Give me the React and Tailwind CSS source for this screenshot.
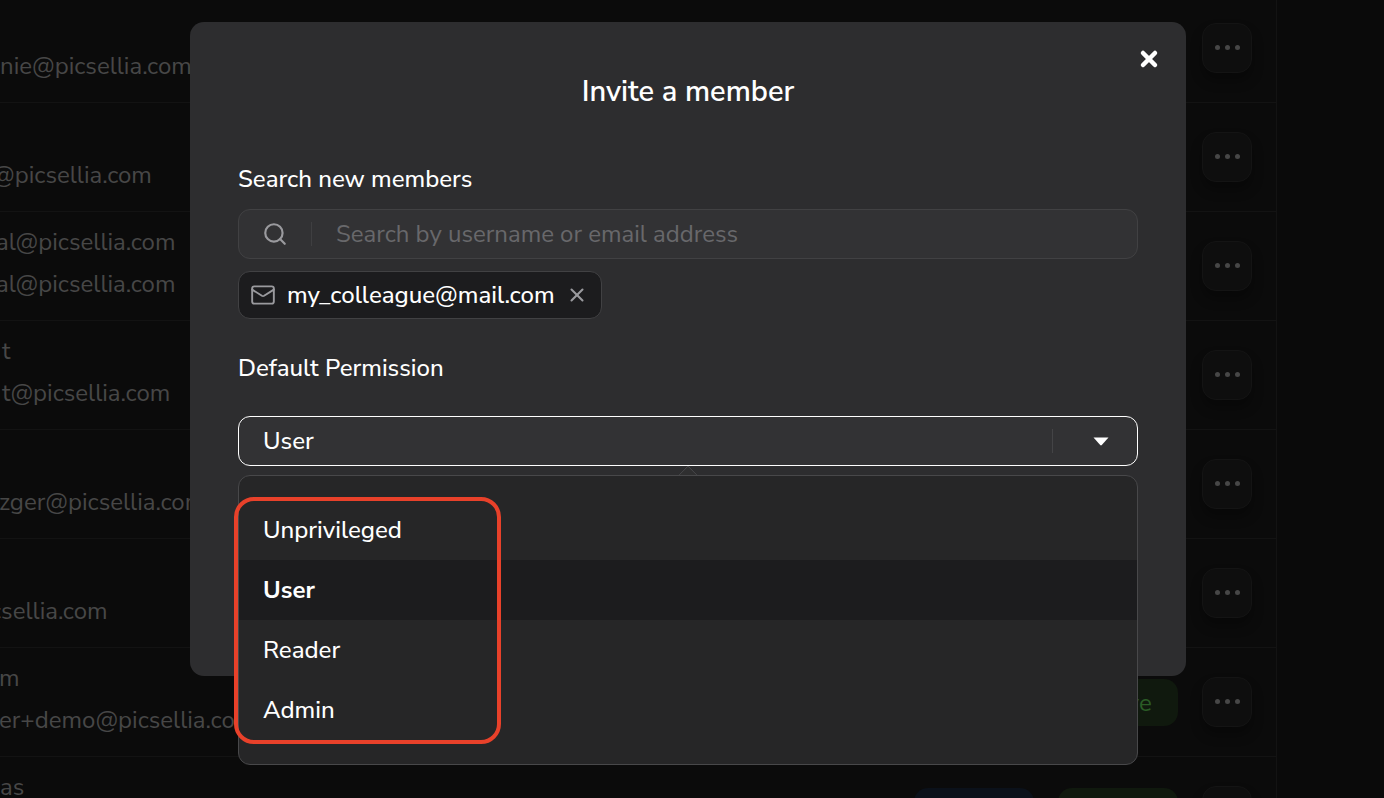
import React from 'react'
import { Search, Mail, X } from 'lucide-react'

const font = { fontFamily: '"Nunito Sans", Lato, "Open Sans", sans-serif' }

const rows = [
  { email: 'nie@picsellia.com', shift: 'ml-0' },
  { email: '@picsellia.com', shift: '-ml-[8px]' },
  { name: 'al@picsellia.com', email: 'al@picsellia.com', shift: '-ml-[4px]' },
  { name: 't', email: 't@picsellia.com', shift: 'ml-[2px]' },
  { email: 'zger@picsellia.com', shift: '-ml-[1px]' },
  { email: 'csellia.com', shift: '-ml-[10px]' },
  { name: 'm', email: 'er+demo@picsellia.com', shift: '-ml-[1px]', badges: ['Active'] },
  { name: 'as', email: '', shift: 'ml-0', badges: ['User', 'Active'] },
]

const Row = ({ row }) => (
  <div className="flex h-[109px] shrink-0 items-start border-b border-[#131313]">
    <div className={`${row.shift} w-[500px] pt-[15px] text-[24px] leading-[30px] text-[#474747]`}>
      <p className="h-[42px] whitespace-nowrap">{row.name}</p>
      <p className="whitespace-nowrap">{row.email}</p>
    </div>
    <div className="ml-auto flex items-start pt-[31px]">
      {(row.badges || []).map((b) => (
        <span
          key={b}
          className={
            b === 'Active'
              ? 'ml-6 flex h-[47px] w-[120px] items-center justify-center rounded-[14px] bg-[#10190e] text-[24px] text-[#2b5c26]'
              : 'flex h-[47px] w-[120px] items-center justify-center rounded-[14px] bg-[#0b111a] text-[24px] text-[#24466f]'
          }
        >
          {b}
        </span>
      ))}
    </div>
    <button className="ml-6 mr-[24px] mt-[29px] flex h-[50px] w-[50px] items-center justify-center gap-[5px] rounded-[14px] border border-[#141414] bg-[#0e0e0e] pb-[2px] shadow-[0_8px_12px_rgba(0,0,0,0.3)]">
      <i className="h-[5px] w-[5px] rounded-full bg-[#474747]" />
      <i className="h-[5px] w-[5px] rounded-full bg-[#474747]" />
      <i className="h-[5px] w-[5px] rounded-full bg-[#474747]" />
    </button>
  </div>
)

const options = ['Unprivileged', 'User', 'Reader', 'Admin']

const App = () => {
  return (
    <div className="relative h-[798px] w-[1384px] overflow-hidden bg-[#0a0a0a]" style={font}>
      <div className="-mt-[6px] flex w-[1277px] flex-col border-r border-[#131313] bg-[#0b0b0b]">
        {rows.map((row, i) => (
          <Row key={i} row={row} />
        ))}
      </div>

      <div className="absolute left-[190px] top-[22px] h-[654px] w-[996px] rounded-[14px] bg-[#2d2d2f] px-[48px] text-white">
        <X className="absolute right-[25px] top-[25px] h-[24px] w-[24px] text-white" strokeWidth={4.5} />
        <h2 className="pt-[50px] text-center text-[29px] font-semibold leading-[40px]">Invite a member</h2>

        <p className="mt-[51px] text-[24px] font-medium leading-[32px]">Search new members</p>
        <div className="mt-[14px] flex h-[50px] items-center rounded-[12px] border border-[#414143] bg-[#323234]">
          <Search className="ml-[23px] h-[26px] w-[26px] text-[#9a9a9e]" strokeWidth={2} />
          <span className="ml-[23px] h-[24px] w-px bg-[#3f3f41]" />
          <span className="ml-[24px] text-[24px] text-[#68686b]">Search by username or email address</span>
        </div>
        <div className="mt-[12px] flex h-[48px] w-[364px] items-center rounded-[12px] border border-[#414143] bg-[#1c1c1e]">
          <Mail className="ml-[11px] h-[26px] w-[26px] text-[#9a9a9e]" strokeWidth={1.75} />
          <span className="ml-[11px] text-[24px] font-medium leading-none">my_colleague@mail.com</span>
          <X className="ml-[11px] h-[22px] w-[22px] text-[#9a9a9e]" strokeWidth={2.25} />
        </div>

        <p className="mt-[33px] text-[24px] font-medium leading-[32px]">Default Permission</p>
        <div className="mt-[32px] flex h-[50px] items-center rounded-[12px] border border-white bg-[#323234] pl-[24px]">
          <span className="text-[24px] font-medium">User</span>
          <span className="ml-auto h-[24px] w-px bg-[#444446]" />
          <svg className="ml-[40px] mr-[28px]" width="16" height="9" viewBox="0 0 16 9">
            <path d="M0.5 0.5 H15.5 L8.8 8 Q8 8.8 7.2 8 Z" fill="#fff" />
          </svg>
        </div>
      </div>

      <span className="absolute left-[681px] top-[468px] h-[14px] w-[14px] rotate-45 rounded-[2px] border-l border-t border-[#48484a] bg-[#2f2f30]" />

      <div className="absolute left-[238px] top-[475px] h-[290px] w-[900px] rounded-[12px] border border-[#48484a] bg-[#262627] py-[24px] text-white">
        {options.map((o) => (
          <div
            key={o}
            className={
              o === 'User'
                ? 'flex h-[60px] items-center bg-[#1c1c1e] pl-[24px] text-[24px] font-bold'
                : 'flex h-[60px] items-center pl-[24px] text-[24px] font-medium'
            }
          >
            {o}
          </div>
        ))}
      </div>

      <div className="absolute left-[234px] top-[497px] h-[247px] w-[267px] rounded-[20px] border-[4px] border-[#e8412a]" />
    </div>
  )
}

export default App
